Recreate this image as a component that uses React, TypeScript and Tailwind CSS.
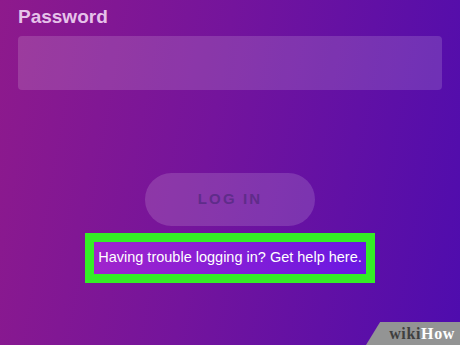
export default function App() {
  return (
    <div className="relative w-[460px] h-[345px] overflow-hidden bg-[linear-gradient(100deg,#8e1a8c_0%,#74149c_45%,#4e0cae_100%)] font-['Liberation_Sans',sans-serif]">
      <div className="px-[18px] pt-[6px]">
        {/* label */}
        <div className="text-[19px] font-bold leading-[22px] text-[#e6c2ea]">Password</div>
        {/* input */}
        <div className="mt-[8px] h-[54px] rounded-[4px] bg-white/15" />
      </div>

      {/* log in button */}
      <div className="mt-[83px] flex justify-center">
        <div className="flex h-[53px] w-[170px] items-center justify-center rounded-full bg-white/15">
          <span className="text-[15px] font-bold tracking-[0.14em] text-[#5f2c8a]">LOG IN</span>
        </div>
      </div>

      {/* help link, highlighted */}
      <div className="mt-[7px] flex justify-center">
        <div className="border-[9px] border-[#34ee26]">
          <div className="flex h-[32px] w-[272px] items-center justify-center bg-[linear-gradient(90deg,#a024cc,#6a18e2)]">
            <span className="text-[14.5px] text-white whitespace-nowrap">Having trouble logging in? Get help here.</span>
          </div>
        </div>
      </div>

      {/* watermark */}
      <div className="absolute bottom-0 right-0 flex h-[23px] w-[94px] items-center justify-end pr-[5px] bg-[#939494] [clip-path:polygon(15%_0,100%_0,100%_100%,0_100%)]">
        <span className="font-['Liberation_Serif',serif] text-[16px] font-bold leading-none tracking-[0.04em]">
          <span className="text-[#3f3f3f]">wiki</span>
          <span className="text-white">How</span>
        </span>
      </div>
    </div>
  );
}
